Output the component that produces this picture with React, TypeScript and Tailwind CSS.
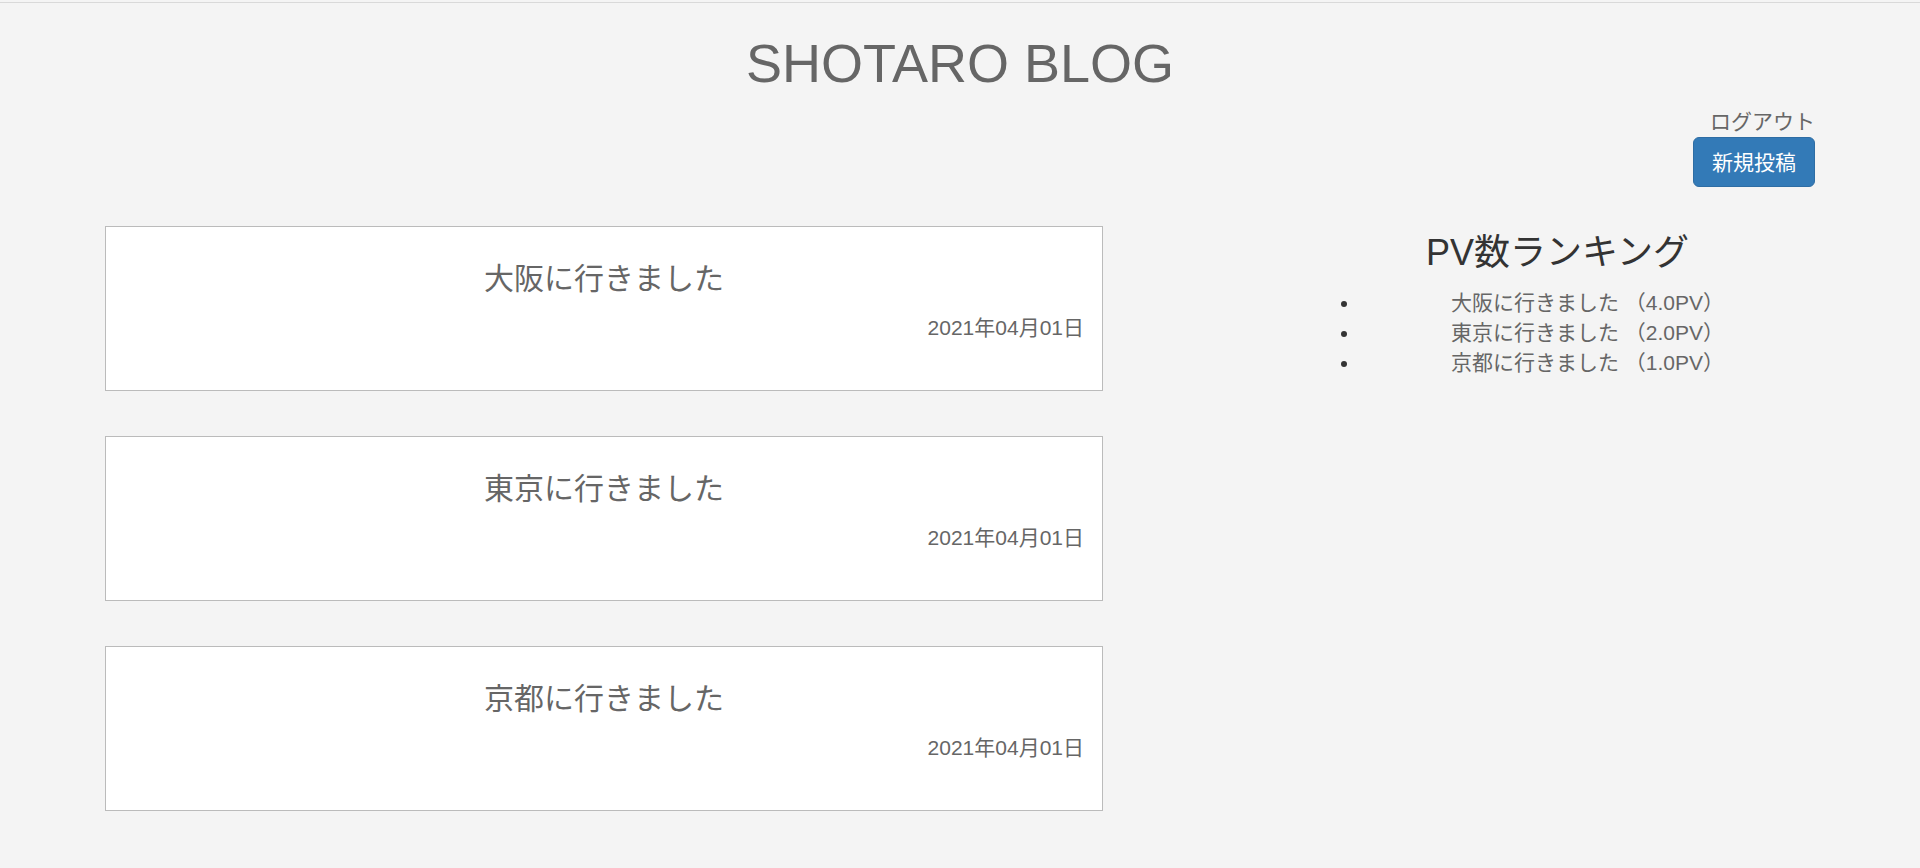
const posts = [
  { title: '大阪に行きました', date: '2021年04月01日' },
  { title: '東京に行きました', date: '2021年04月01日' },
  { title: '京都に行きました', date: '2021年04月01日' },
];

const ranking = [
  { title: '大阪に行きました', pv: '4.0PV' },
  { title: '東京に行きました', pv: '2.0PV' },
  { title: '京都に行きました', pv: '1.0PV' },
];

const PostCard = ({ title, date }: { title: string; date: string }) => {
  return (
    <div className="h-[165px] border border-[#bbbbbb] bg-white pt-[35px]">
      <h4 className="text-center text-[30px] leading-[33px] font-normal text-[#666]">{title}</h4>
      <p className="mt-[18px] pr-[18px] text-right text-[21px] leading-[30px] text-[#666]">{date}</p>
    </div>
  );
};

export default function App() {
  return (
    <div className="min-h-screen bg-[#f4f4f4] pt-[2px] font-['Liberation_Sans','Noto_Sans_CJK_JP',sans-serif]">
      <div className="border-t border-[#d9d9d9]">
        <div className="mx-auto w-[1710px] pb-[40px]">
          <h1 className="mt-[31px] mb-[14px] text-center text-[54px] leading-[1.1] font-normal text-[#666]">
            SHOTARO BLOG
          </h1>

          <div className="flex flex-col items-end">
            <a className="text-[21px] leading-[30px] text-[#666] cursor-pointer">ログアウト</a>
            <button className="h-[50px] rounded-[6px] border border-[#2e6da4] bg-[#337ab7] px-[18px] text-[21px] text-white">
              新規投稿
            </button>
          </div>

          <div className="mt-[39px] grid grid-cols-[998px_515px] gap-x-[197px]">
            <div className="flex flex-col gap-[45px]">
              {posts.map((post) => (
                <PostCard key={post.title} title={post.title} date={post.date} />
              ))}
            </div>

            <div className="pt-[7px]">
              <h3 className="text-center text-[36px] leading-[1.1] font-normal text-[#333]">PV数ランキング</h3>
              <ul className="mt-[15px] list-disc pl-[60px] text-[21px] leading-[30px] text-[#333]">
                {ranking.map((item) => (
                  <li key={item.title} className="text-center">
                    <span className="text-[#666]">
                      {item.title} （{item.pv}）
                    </span>
                  </li>
                ))}
              </ul>
            </div>
          </div>
        </div>
      </div>
    </div>
  );
}
